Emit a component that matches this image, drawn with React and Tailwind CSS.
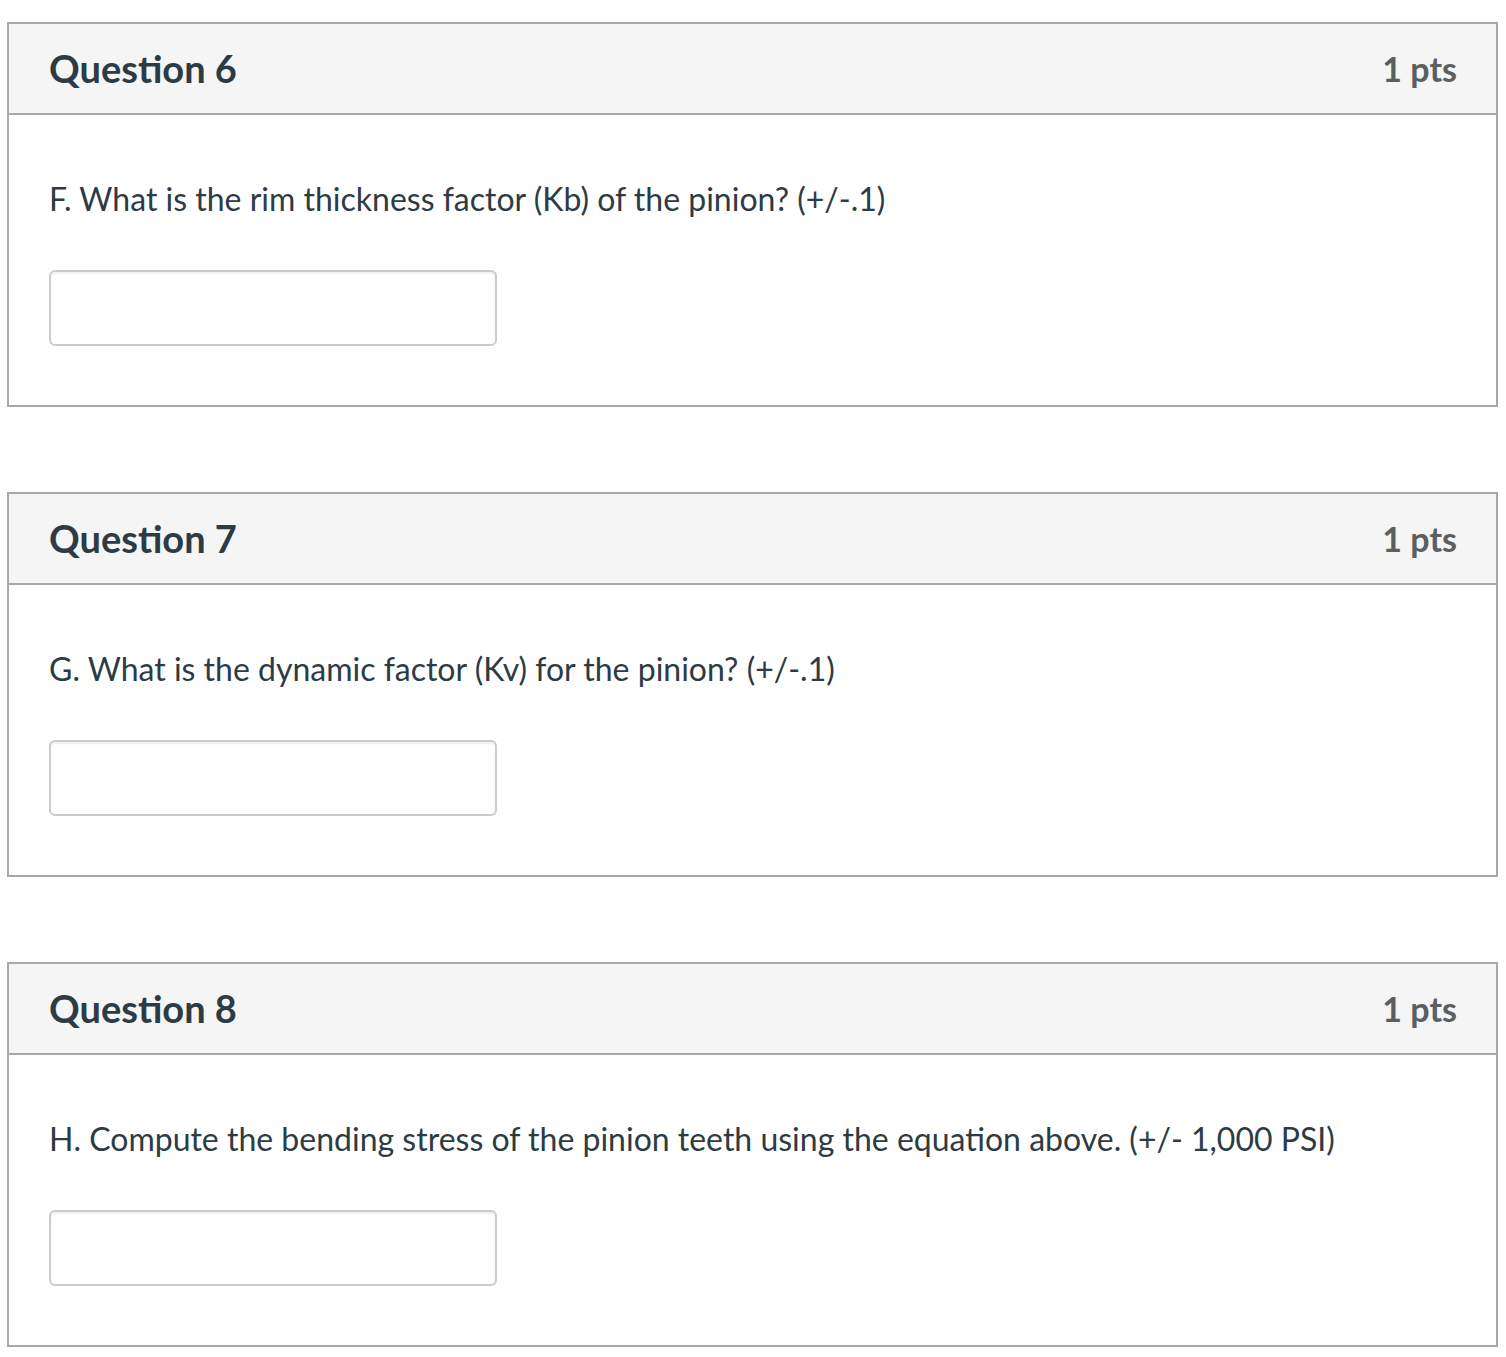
const questions = [
  { n: 6, text: 'F. What is the rim thickness factor (Kb) of the pinion? (+/-.1)' },
  { n: 7, text: 'G. What is the dynamic factor (Kv) for the pinion? (+/-.1)' },
  { n: 8, text: 'H. Compute the bending stress of the pinion teeth using the equation above. (+/- 1,000 PSI)' },
];

function QuestionCard({ n, text }) {
  return (
    <div className="border-2 border-[#a8a8a8] bg-white h-[385px] flex flex-col">
      {/* cabeçalho */}
      <div className="h-[91px] shrink-0 bg-[#f5f5f5] border-b-2 border-[#a8a8a8] flex items-center justify-between pl-[40px] pr-[39px]">
        <h2 className="text-[38px] font-bold text-[#2d3b45]">Question {n}</h2>
        <span className="text-[34px] font-bold text-[#5b5f62]">1 pts</span>
      </div>
      <div className="pl-[40px] pt-[64px]">
        <p className="text-[32px] leading-[40px] text-[#2d3b45]">{text}</p>
        <input
          type="text"
          className="mt-[51px] w-[448px] h-[76px] border-2 border-[#cbcbcb] rounded-[6px] bg-white shadow-[inset_0_2px_2px_rgba(0,0,0,0.06)] focus:outline-none"
        />
      </div>
    </div>
  );
}

export default function App() {
  return (
    <div className="min-h-screen bg-white pt-[22px] pl-[7px] pr-[8px] flex flex-col gap-[85px]" style={{ fontFamily: 'Lato, "Open Sans", sans-serif' }}>
      {questions.map((q) => (
        <QuestionCard key={q.n} {...q} />
      ))}
    </div>
  );
}
